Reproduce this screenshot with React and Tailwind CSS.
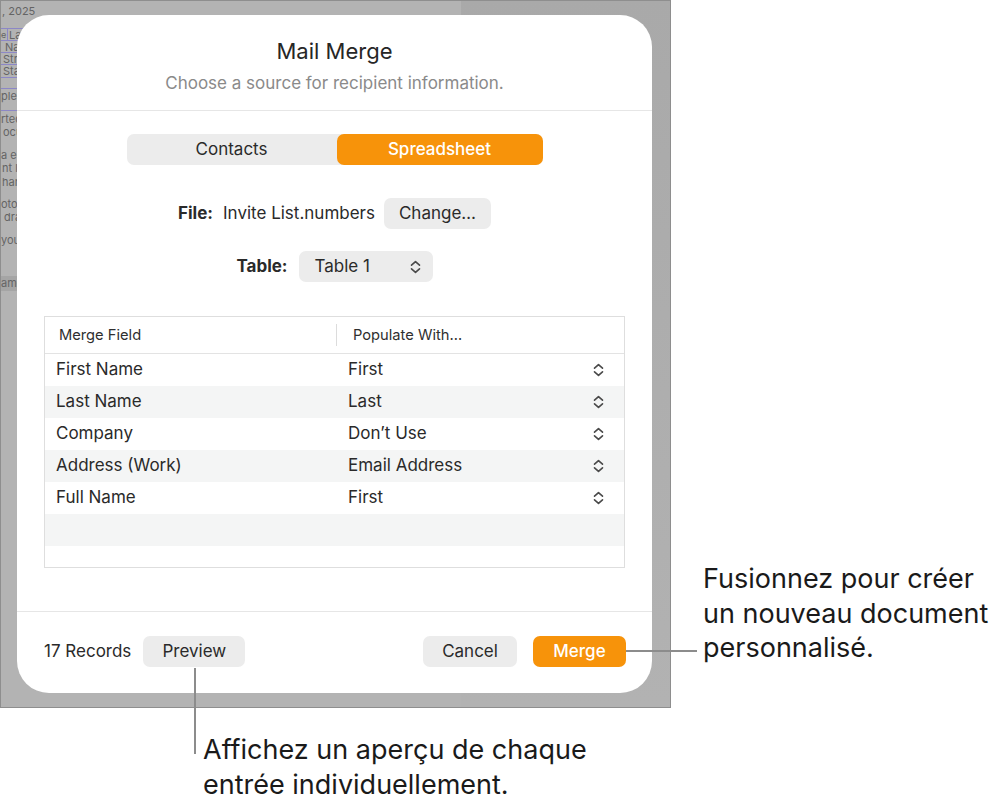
import React from "react";

const Chevrons = ({ className = "" }) => (
  <svg width="11" height="14" viewBox="0 0 11 14" className={className} fill="none">
    <path d="M1.5 5.2 L5.5 1.6 L9.5 5.2" stroke="#4a4a4a" strokeWidth="1.6" strokeLinecap="round" strokeLinejoin="round" />
    <path d="M1.5 8.8 L5.5 12.4 L9.5 8.8" stroke="#4a4a4a" strokeWidth="1.6" strokeLinecap="round" strokeLinejoin="round" />
  </svg>
);

const rows = [
  ["First Name", "First"],
  ["Last Name", "Last"],
  ["Company", "Don\u2019t Use"],
  ["Address (Work)", "Email Address"],
  ["Full Name", "First"],
];

function DocStrip() {
  return (
    <div className="w-[460px] h-full bg-[#b3b3b3] text-[11px] leading-[12px] text-[#646464] pt-[4px]">
      <div className="h-[12px] pl-[1px]">, 2025</div>
      <div className="mt-[11px] w-[30px] border-y border-r border-[#8c87c6]">
        <div className="flex h-[12px] border-b border-[#8c87c6]">
          <div className="w-[7px] border-r border-[#8c87c6] text-[9px]">e</div>
          <div className="pl-[1px]">Las</div>
        </div>
        <div className="h-[12px] pl-[4px] border-b border-[#8c87c6]">Nam</div>
        <div className="h-[12px] pl-[2px] border-b border-[#8c87c6]">Stre</div>
        <div className="h-[12px] pl-[2px]">Stat</div>
      </div>
      <div className="mt-[10px] w-[30px] h-[23px] border-y border-r border-[#8c87c6] pt-[1px]">plen</div>
      <div className="mt-[2px] h-[13px]">rted</div>
      <div className="h-[13px] pl-[2px]">ocu</div>
      <div className="mt-[10px] h-[13px]">a ed</div>
      <div className="h-[14px] pl-[1px]">nt lo</div>
      <div className="h-[13px] pl-[1px]">hang</div>
      <div className="mt-[9px] h-[13px]">otos</div>
      <div className="h-[13px] pl-[3px]">dra</div>
      <div className="mt-[10px] h-[13px]">your</div>
      <div className="mt-[29px] h-[15px] bg-[#a5a5a5] pt-[1px]">ame</div>
    </div>
  );
}

export default function App() {
  return (
    <div
      className="relative w-[1004px] h-[806px] bg-white overflow-hidden"
      style={{ fontFamily: "Inter, 'Noto Sans', 'Liberation Sans', sans-serif" }}
    >
      <div className="relative w-[671px] h-[708px] border border-[#8e8e8e] bg-[#aaaaaa] overflow-hidden flex">
        <DocStrip />
        <div className="flex-1 bg-gradient-to-b from-[#a9a9a9] to-[#b2b2b2]" />

        {/* Dialog */}
        <div className="absolute left-[16px] top-[14px] w-[635px] h-[678px] bg-white rounded-[32px] flex flex-col text-[#2a2a2a]">
          <div className="pt-[23px] text-center">
            <div className="text-[22px] leading-[26px] text-[#262626]">Mail Merge</div>
            <div className="mt-[9px] text-[17px] leading-[20px] text-[#8a8a8a]">
              Choose a source for recipient information.
            </div>
          </div>
          <div className="mt-[17px] h-px bg-[#e6e6e6]" />

          <div className="mt-[23px] flex justify-center">
            <div className="flex h-[31px] rounded-[7px] bg-[#ececec]">
              <div className="w-[210px] flex items-center justify-center text-[17px] text-[#2a2a2a]">Contacts</div>
              <div className="w-[206px] flex items-center justify-center rounded-[7px] bg-[#f7930a] text-[17px] font-medium text-white">
                Spreadsheet
              </div>
            </div>
          </div>

          <div className="mt-[33px] flex justify-center items-center text-[17px]">
            <span className="font-bold text-[#2a2a2a]">File:</span>
            <span className="ml-[10px]">Invite List.numbers</span>
            <div className="ml-[9px] w-[107px] h-[31px] rounded-[7px] bg-[#ececec] flex items-center justify-center">
              Change…
            </div>
          </div>

          <div className="mt-[22px] flex justify-center items-center text-[17px]">
            <span className="font-bold text-[#2a2a2a]">Table:</span>
            <div className="ml-[11px] w-[134px] h-[31px] rounded-[7px] bg-[#ececec] flex items-center justify-between pl-[16px] pr-[12px]">
              <span>Table 1</span>
              <Chevrons />
            </div>
          </div>

          <div className="mt-[34px] mx-[27px] h-[252px] border border-[#dedede] overflow-hidden flex flex-col">
            <div className="grid grid-cols-[291px_1fr] h-[37px] border-b border-[#e3e3e3] text-[14.7px] text-[#2f2f2f]">
              <div className="flex items-center pl-[14px]">Merge Field</div>
              <div className="flex items-center">
                <div className="w-px h-[22px] bg-[#dcdcdc]" />
                <span className="ml-[16px]">Populate With…</span>
              </div>
            </div>
            <div className="flex-1 overflow-hidden text-[17px]">
              {rows.map(([a, b], i) => (
                <div
                  key={i}
                  className={`grid grid-cols-[291px_1fr] h-[32px] ${i % 2 === 1 ? "bg-[#f4f5f5]" : "bg-white"}`}
                >
                  <div className="flex items-center pl-[11px]">{a}</div>
                  <div className="flex items-center justify-between pl-[12px] pr-[20px]">
                    <span>{b}</span>
                    <Chevrons />
                  </div>
                </div>
              ))}
              <div className="h-[32px] bg-[#f4f5f5]" />
            </div>
          </div>

          <div className="flex-1" />
          <div className="h-px bg-[#e6e6e6]" />
          <div className="pt-[24px] pb-[26px] pl-[27px] pr-[26px] flex items-center text-[17px]">
            <span>17 Records</span>
            <div className="ml-[12px] w-[102px] h-[31px] rounded-[7px] bg-[#ececec] flex items-center justify-center">
              Preview
            </div>
            <div className="flex-1" />
            <div className="w-[94px] h-[31px] rounded-[7px] bg-[#ececec] flex items-center justify-center">Cancel</div>
            <div className="ml-[16px] w-[93px] h-[31px] rounded-[7px] bg-[#f7930a] text-white font-medium flex items-center justify-center">
              Merge
            </div>
          </div>
        </div>
      </div>

      {/* Callouts */}
      <div className="absolute left-[194px] top-[668px] w-[2px] h-[86px] bg-[#8c8c8c]" />
      <div className="absolute left-[203px] top-[732px] text-[27px] leading-[35px] text-[#1a1a1a] whitespace-nowrap">
        <div>Affichez un aperçu de chaque</div>
        <div>entrée individuellement.</div>
      </div>

      <div className="absolute left-[626px] top-[650px] w-[71px] h-[2px] bg-[#8c8c8c]" />
      <div className="absolute left-[703px] top-[562px] text-[27px] leading-[34.5px] text-[#1a1a1a] whitespace-nowrap">
        <div>Fusionnez pour créer</div>
        <div>un nouveau document</div>
        <div>personnalisé.</div>
      </div>
    </div>
  );
}
